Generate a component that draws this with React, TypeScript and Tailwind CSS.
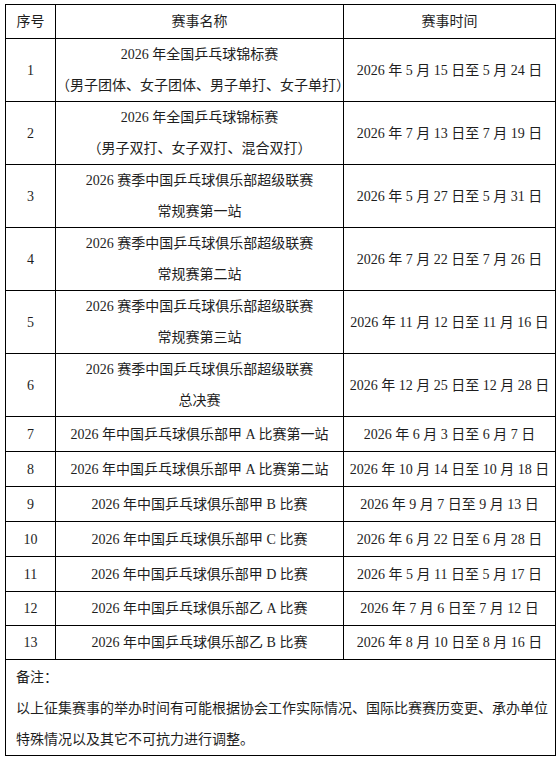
import React from "react";

type Row = { no: string; name: string[]; time: string; h: number };

const rows: Row[] = [
  { no: "1", name: ["2026 年全国乒乓球锦标赛", "（男子团体、女子团体、男子单打、女子单打）"], time: "2026 年 5 月 15 日至 5 月 24 日", h: 63 },
  { no: "2", name: ["2026 年全国乒乓球锦标赛", "（男子双打、女子双打、混合双打）"], time: "2026 年 7 月 13 日至 7 月 19 日", h: 63 },
  { no: "3", name: ["2026 赛季中国乒乓球俱乐部超级联赛", "常规赛第一站"], time: "2026 年 5 月 27 日至 5 月 31 日", h: 63 },
  { no: "4", name: ["2026 赛季中国乒乓球俱乐部超级联赛", "常规赛第二站"], time: "2026 年 7 月 22 日至 7 月 26 日", h: 63 },
  { no: "5", name: ["2026 赛季中国乒乓球俱乐部超级联赛", "常规赛第三站"], time: "2026 年 11 月 12 日至 11 月 16 日", h: 63 },
  { no: "6", name: ["2026 赛季中国乒乓球俱乐部超级联赛", "总决赛"], time: "2026 年 12 月 25 日至 12 月 28 日", h: 63 },
  { no: "7", name: ["2026 年中国乒乓球俱乐部甲 A 比赛第一站"], time: "2026 年 6 月 3 日至 6 月 7 日", h: 35 },
  { no: "8", name: ["2026 年中国乒乓球俱乐部甲 A 比赛第二站"], time: "2026 年 10 月 14 日至 10 月 18 日", h: 35 },
  { no: "9", name: ["2026 年中国乒乓球俱乐部甲 B 比赛"], time: "2026 年 9 月 7 日至 9 月 13 日", h: 35 },
  { no: "10", name: ["2026 年中国乒乓球俱乐部甲 C 比赛"], time: "2026 年 6 月 22 日至 6 月 28 日", h: 35 },
  { no: "11", name: ["2026 年中国乒乓球俱乐部甲 D 比赛"], time: "2026 年 5 月 11 日至 5 月 17 日", h: 35 },
  { no: "12", name: ["2026 年中国乒乓球俱乐部乙 A 比赛"], time: "2026 年 7 月 6 日至 7 月 12 日", h: 34 },
  { no: "13", name: ["2026 年中国乒乓球俱乐部乙 B 比赛"], time: "2026 年 8 月 10 日至 8 月 16 日", h: 34 },
];

export default function App() {
  return (
    <div
      className="w-[559px] h-[761px] bg-white pt-[4px] pl-[5px] text-[#1e1e1e] text-[14px]"
      style={{ fontFamily: '"Liberation Serif", "Noto Sans CJK SC", serif' }}
    >
      <table className="w-[550px] border-collapse table-fixed">
        <colgroup>
          <col className="w-[50px]" />
          <col className="w-[288px]" />
          <col className="w-[212px]" />
        </colgroup>
        <tbody>
          <tr className="h-[34px]">
            <td className="border border-black text-center align-middle p-0">序号</td>
            <td className="border border-black text-center align-middle p-0">赛事名称</td>
            <td className="border border-black text-center align-middle p-0">赛事时间</td>
          </tr>
          {rows.map((r) => (
            <tr key={r.no} style={{ height: r.h }}>
              <td className="border border-black text-center align-middle p-0">{r.no}</td>
              <td className="border border-black text-center align-middle p-0 whitespace-nowrap">
                {r.name.map((l, i) => (
                  <div key={i} className="leading-[31px]">
                    {l}
                  </div>
                ))}
              </td>
              <td className="border border-black text-center align-middle p-0 whitespace-nowrap">{r.time}</td>
            </tr>
          ))}
          <tr className="h-[95px]">
            <td colSpan={3} className="border border-black align-top pt-[2px] pl-[10px] p-0 whitespace-nowrap">
              <div className="leading-[31px]">备注：</div>
              <div className="leading-[31px]">以上征集赛事的举办时间有可能根据协会工作实际情况、国际比赛赛历变更、承办单位</div>
              <div className="leading-[31px]">特殊情况以及其它不可抗力进行调整。</div>
            </td>
          </tr>
        </tbody>
      </table>
    </div>
  );
}
